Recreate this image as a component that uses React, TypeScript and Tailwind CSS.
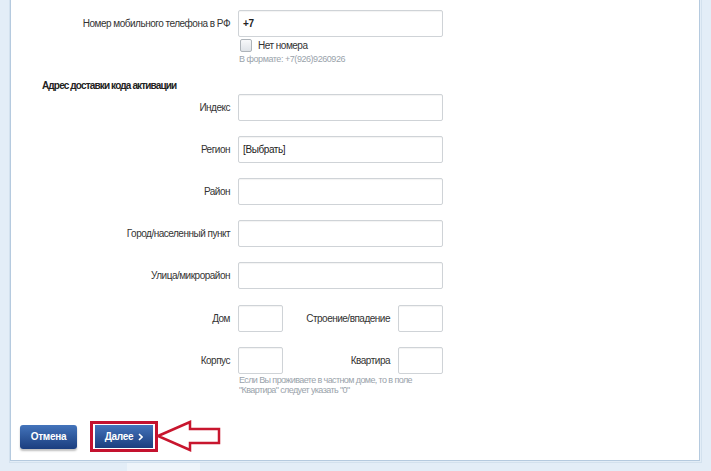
import React from "react";

const Label = ({ children, w = "w-[227px]" }: { children: React.ReactNode; w?: string }) => (
  <div className={`${w} shrink-0 text-right pr-[8px] text-[10px] tracking-[-0.5px] text-[#333]`}>{children}</div>
);

const Input = ({ w = "w-[205px]", value, bold }: { w?: string; value?: string; bold?: boolean }) => (
  <div
    className={`${w} h-[27px] shrink-0 rounded-[2px] border border-[#cfd3d7] bg-white shadow-[inset_0_1px_1px_rgba(0,0,0,0.05)] flex items-center pl-[4px] text-[10px] tracking-[-0.4px] text-[#222] ${bold ? "font-bold" : ""}`}
  >
    {value}
  </div>
);

export default function App() {
  return (
    <div
      className="w-[711px] h-[471px] bg-[#e3edf7] overflow-hidden relative"
      style={{ fontFamily: '"Liberation Sans", Arial, sans-serif' }}
    >
      <div className="ml-[9px] w-[693px] h-[463px] border-r border-b border-l border-[#d3e1ee] pr-[2px] pb-[1px]">
        <div className="w-[690px] h-[461px] bg-white border-l border-r border-b border-[#b5cadf] flex flex-col">
          {/* phone */}
          <div className="flex items-center mt-[10px]">
            <Label>Номер мобильного телефона в РФ</Label>
            <Input value="+7" bold />
          </div>
          <div className="flex items-center mt-[2px] ml-[229px] h-[13px]">
            <div className="w-[12px] h-[13px] rounded-[2px] border border-[#aeb4ba] bg-gradient-to-b from-[#f7f8fa] to-[#dfe3e8]" />
            <span className="ml-[6px] text-[10px] tracking-[-0.5px] text-[#333]">Нет номера</span>
          </div>
          <div className="ml-[228px] mt-[2px] text-[9px] tracking-[-0.45px] leading-[11px] text-[#9aa3ab]">В формате: +7(926)9260926</div>

          <div className="ml-[31px] mt-[15px] text-[10px] font-bold tracking-[-0.85px] text-[#222] leading-[12px]">Адрес доставки кода активации</div>

          <div className="flex items-center mt-[2px]">
            <Label>Индекс</Label>
            <Input />
          </div>
          <div className="flex items-center mt-[15px]">
            <Label>Регион</Label>
            <Input value="[Выбрать]" />
          </div>
          <div className="flex items-center mt-[15px]">
            <Label>Район</Label>
            <Input />
          </div>
          <div className="flex items-center mt-[15px]">
            <Label>Город/населенный пункт</Label>
            <Input />
          </div>
          <div className="flex items-center mt-[15px]">
            <Label>Улица/микрорайон</Label>
            <Input />
          </div>
          <div className="flex items-center mt-[16px]">
            <Label>Дом</Label>
            <Input w="w-[45px]" />
            <Label w="w-[115px]">Строение/впадение</Label>
            <Input w="w-[45px]" />
          </div>
          <div className="flex items-center mt-[15px]">
            <Label>Корпус</Label>
            <Input w="w-[45px]" />
            <Label w="w-[115px]">Квартира</Label>
            <Input w="w-[45px]" />
          </div>
          <div className="ml-[228px] mt-[1px] text-[9px] tracking-[-0.6px] leading-[10px] text-[#9aa3ab]">
            Если Вы проживаете в частном доме, то в поле
            <br />
            "Квартира" следует указать "0"
          </div>

          <div className="flex items-center mt-[26px] ml-[9px]">
            <div className="w-[57px] h-[24px] rounded-[3px] bg-gradient-to-b from-[#4474bb] to-[#1b3e7f] shadow-[0_2px_2px_rgba(0,0,0,0.25)] flex items-center justify-center text-white text-[10px] font-bold tracking-[-0.3px]">
              Отмена
            </div>
            <div className="ml-[13px] border-[3px] border-[#c4122f] px-[2px] py-[1px]">
              <div className="w-[58px] h-[23px] bg-gradient-to-b from-[#4474bb] to-[#1b3e7f] flex items-center justify-center text-white text-[10px] font-bold tracking-[-0.3px]">
                Далее
                <svg className="ml-[5px]" width="5" height="8" viewBox="0 0 5 8">
                  <polyline points="1,1 4,4 1,7" fill="none" stroke="white" strokeWidth="1.6" />
                </svg>
              </div>
            </div>
          </div>
        </div>
      </div>
      <div className="absolute left-[127px] top-[463px] w-[73px] h-[8px] bg-[#eef4fa]" />
      <svg className="absolute left-0 top-0" width="711" height="471" viewBox="0 0 711 471">
        <polygon
          points="158,436 190,422 190,429 219,429 219,443 190,443 190,450"
          fill="none"
          stroke="#c8162e"
          strokeWidth="2.5"
          strokeLinejoin="miter"
        />
      </svg>
    </div>
  );
}
